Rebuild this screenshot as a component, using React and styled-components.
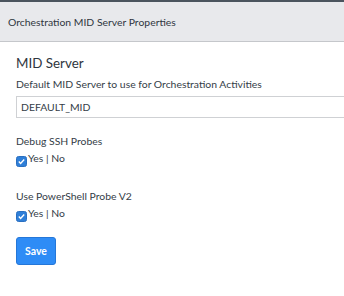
import styled, { createGlobalStyle } from 'styled-components';

const GlobalStyle = createGlobalStyle`
  html, body {
    margin: 0;
    padding: 0;
    background: #ffffff;
    font-family: Lato, "Open Sans", sans-serif;
    color: #343d47;
  }
`;

function CheckedBox() {
  return (
    <svg width="11" height="11" viewBox="0 0 11 11">
      <rect x="0.5" y="0.5" width="10" height="10" rx="2" fill="#2f7fd8" stroke="#2a6fc0" />
      <path d="M2.8 5.6 L4.6 7.4 L8.2 3.6" fill="none" stroke="#ffffff" strokeWidth="1.4" />
    </svg>
  );
}

export default function App() {
  return (
    <>
      <GlobalStyle />
      <Page>
        <Header>
          <HeaderTitle>Orchestration MID Server Properties</HeaderTitle>
        </Header>
        <Body>
          <SectionTitle>MID Server</SectionTitle>
          <Field>
            <FieldLabel $gap={5}>Default MID Server to use for Orchestration Activities</FieldLabel>
            <TextInput defaultValue="DEFAULT_MID" />
          </Field>
          <Field $top={16}>
            <FieldLabel>Debug SSH Probes</FieldLabel>
            <CheckRow>
              <CheckedBox />
              <CheckText>Yes | No</CheckText>
            </CheckRow>
          </Field>
          <Field $top={24}>
            <FieldLabel>Use PowerShell Probe V2</FieldLabel>
            <CheckRow>
              <CheckedBox />
              <CheckText>Yes | No</CheckText>
            </CheckRow>
          </Field>
          <SaveButton>Save</SaveButton>
        </Body>
      </Page>
    </>
  );
}

const Page = styled.div`
  width: 344px;
  height: 296px;
  overflow: hidden;
  border-top: 2px solid #4b545e;
  box-sizing: border-box;
`;

const Header = styled.div`
  height: 39px;
  background: #e8e9ec;
  border-bottom: 1px solid #c5c7cb;
  display: flex;
  align-items: center;
  padding: 0 8px;
`;

const HeaderTitle = styled.span`
  font-size: 10.4px;
  color: #2f3640;
`;

const Body = styled.div`
  padding: 12px 0 0 16px;
  display: flex;
  flex-direction: column;
  align-items: flex-start;
`;

const SectionTitle = styled.div`
  font-size: 13.4px;
  line-height: 18px;
  color: #2f3640;
  margin-bottom: 5px;
`;

const Field = styled.div`
  display: flex;
  flex-direction: column;
  align-items: stretch;
  align-self: stretch;
  margin-top: ${p => p.$top || 0}px;
`;

const FieldLabel = styled.div`
  font-size: 10.4px;
  line-height: 14px;
  color: #343d47;
  margin-bottom: ${p => p.$gap ?? 3}px;
`;

const TextInput = styled.input`
  height: 22px;
  box-sizing: border-box;
  width: 340px;
  border: 1px solid #cfd1d4;
  border-right: none;
  padding: 0 4px;
  font-family: Lato, "Open Sans", sans-serif;
  font-size: 10.4px;
  color: #343d47;
  outline: none;
`;

const CheckRow = styled.div`
  display: flex;
  align-items: flex-end;
  gap: 1px;
  svg {
    margin-bottom: -2px;
  }
`;

const CheckText = styled.span`
  font-size: 10.4px;
  line-height: 14px;
  color: #343d47;
`;

const SaveButton = styled.button`
  margin-top: 17px;
  width: 40px;
  height: 28px;
  background: #2e8cf6;
  border: 1px solid #2577d8;
  border-radius: 3px;
  color: #ffffff;
  font-family: Lato, "Open Sans", sans-serif;
  font-weight: 700;
  font-size: 10.5px;
  padding: 0;
`;
